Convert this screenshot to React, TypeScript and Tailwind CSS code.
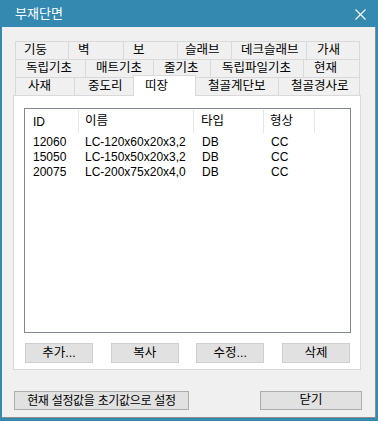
import React from 'react';

type Tab = { label: string; w: string; pl: string };

const row1: Tab[] = [
  { label: '기둥', w: 'w-[53px]', pl: 'pl-[8px]' },
  { label: '벽', w: 'w-[55px]', pl: 'pl-[9px]' },
  { label: '보', w: 'w-[54px]', pl: 'pl-[9px]' },
  { label: '슬래브', w: 'w-[54px]', pl: 'pl-[7px]' },
  { label: '데크슬래브', w: 'w-[75px]', pl: 'pl-[9px]' },
  { label: '가새', w: 'w-[54px]', pl: 'pl-[10px]' },
];

const row2: Tab[] = [
  { label: '독립기초', w: 'w-[70px]', pl: 'pl-[10px]' },
  { label: '매트기초', w: 'w-[68px]', pl: 'pl-[10px]' },
  { label: '줄기초', w: 'w-[57px]', pl: 'pl-[10px]' },
  { label: '독립파일기초', w: 'w-[93px]', pl: 'pl-[11px]' },
  { label: '현재', w: 'w-[57px]', pl: 'pl-[10px]' },
];

const sections = [
  { id: '12060', name: 'LC-120x60x20x3,2', type: 'DB', shape: 'CC' },
  { id: '15050', name: 'LC-150x50x20x3,2', type: 'DB', shape: 'CC' },
  { id: '20075', name: 'LC-200x75x20x4,0', type: 'DB', shape: 'CC' },
];

const TabRow = ({ tabs }: { tabs: Tab[] }) => (
  <div className="flex h-[18px]">
    {tabs.map((t, i) => (
      <div
        key={t.label}
        className={`${t.w} ${t.pl} flex items-center border-t border-l border-[#d9d9d9] bg-[#f0f0f0] ${i === tabs.length - 1 ? 'border-r' : ''}`}
      >
        {t.label}
      </div>
    ))}
  </div>
);

const App: React.FC = () => {
  return (
    <div className="w-[378px] h-[421px] bg-[#3489b1] flex flex-col pl-[2px] pr-[2px] pb-[3px] font-['Liberation_Sans','Noto_Sans_CJK_KR',sans-serif] text-[12.5px] text-black leading-none">
      {/* title bar */}
      <div className="h-[27px] flex items-center justify-between pl-[13px] pr-[10px] text-white">
        <span className="text-[13px]">부재단면</span>
        <svg width="11" height="11" viewBox="0 0 11 11" className="mt-[2px]">
          <path d="M0.5 0.5L10.5 10.5M10.5 0.5L0.5 10.5" stroke="white" strokeWidth="1.1" />
        </svg>
      </div>

      <div className="flex-1 bg-[#f0f0f0] border-r border-b border-[#8c8c8c] flex flex-col">
        {/* tabs */}
        <div className="ml-[13px] mt-[14px] w-[345px] flex flex-col">
          <TabRow tabs={row1} />
          <TabRow tabs={row2} />
          <div className="flex h-[18px]">
            <div className="w-[59px] pl-[12px] flex items-center border-t border-l border-[#d9d9d9]">사재</div>
            <div className="w-[59px] pl-[13px] flex items-center border-t border-l border-[#d9d9d9]">중도리</div>
            <div className="relative z-10 w-[63px] h-[21px] -mt-[2px] pl-[11px] pt-[1px] flex items-center bg-white border-t border-l border-r border-[#d9d9d9]">띠장</div>
            <div className="w-[82px] pl-[12px] flex items-center border-t border-[#d9d9d9]">철골계단보</div>
            <div className="w-[82px] pl-[12px] flex items-center border-t border-l border-r border-[#d9d9d9]">철골경사로</div>
          </div>
        </div>

        {/* tab page */}
        <div className="ml-[11px] w-[348px] h-[275px] bg-white border border-[#d9d9d9] flex flex-col pl-[10px] pr-[9px] pt-[12px]">
          <div className="h-[225px] border border-[#828790] flex flex-col">
            <div className="h-[25px] flex">
              <div className="w-[54px] my-[1px] pl-[8px] flex items-center border-r border-[#e5e5e5] text-[12px]">ID</div>
              <div className="w-[115px] my-[1px] pl-[6px] flex items-center border-r border-[#e5e5e5]">이름</div>
              <div className="w-[70px] my-[1px] pl-[7px] flex items-center border-r border-[#e5e5e5]">타입</div>
              <div className="w-[51px] my-[1px] pl-[6px] flex items-center border-r border-[#e5e5e5]">형상</div>
            </div>
            {sections.map((s) => (
              <div key={s.id} className="h-[15px] flex items-center text-[12px]">
                <div className="w-[54px] pl-[8px]">{s.id}</div>
                <div className="w-[115px] pl-[6px]">{s.name}</div>
                <div className="w-[70px] pl-[8px]">{s.type}</div>
                <div className="w-[51px] pl-[7px]">{s.shape}</div>
              </div>
            ))}
          </div>

          <div className="mt-[10px] flex justify-between pl-[1px] pr-[1px]">
            {['추가...', '복사', '수정...', '삭제'].map((b) => (
              <button
                key={b}
                className="w-[68px] h-[20px] bg-[#e1e1e1] border border-[#cfcfcf] flex items-center justify-center"
              >
                {b}
              </button>
            ))}
          </div>
        </div>

        {/* footer buttons */}
        <div className="mt-[21px] flex justify-between pl-[12px] pr-[13px]">
          <button className="w-[175px] h-[19px] bg-[#e1e1e1] border border-[#adadad] flex items-center justify-center whitespace-nowrap text-[12px] tracking-[-0.3px]">
            현재 설정값을 초기값으로 설정
          </button>
          <button className="w-[102px] h-[19px] bg-[#e1e1e1] border border-[#adadad] flex items-center justify-center">
            닫기
          </button>
        </div>
      </div>
    </div>
  );
};

export default App;
